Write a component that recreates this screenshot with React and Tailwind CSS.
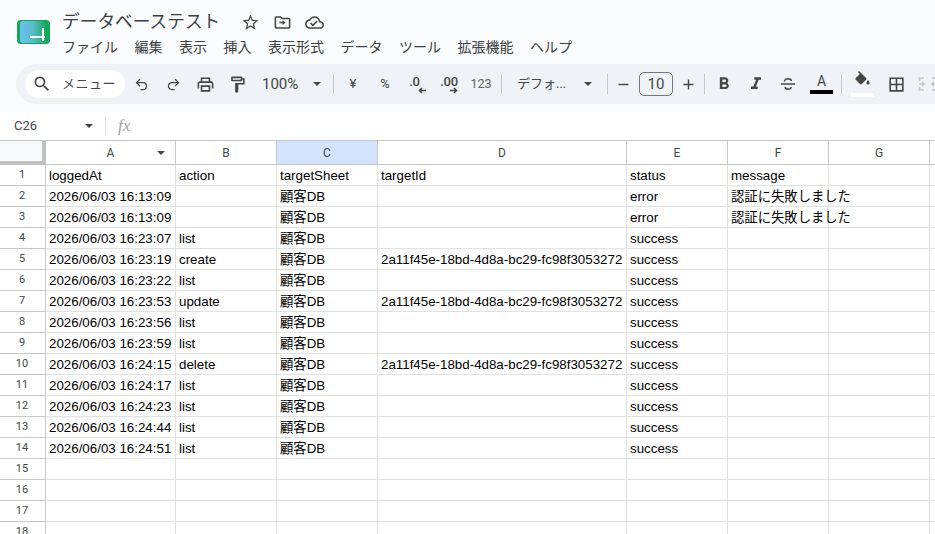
import { Undo2, Redo2 } from "lucide-react";

const menus = ["ファイル", "編集", "表示", "挿入", "表示形式", "データ", "ツール", "拡張機能", "ヘルプ"];
const cols = [
  { name: "A", w: "w-[130px]" },
  { name: "B", w: "w-[101px]" },
  { name: "C", w: "w-[101px]" },
  { name: "D", w: "w-[249px]" },
  { name: "E", w: "w-[101px]" },
  { name: "F", w: "w-[101px]" },
  { name: "G", w: "w-[101px]" },
  { name: "", w: "w-[6px]" },
];
const id = "2a11f45e-18bd-4d8a-bc29-fc98f3053272";
const err = "認証に失敗しました";
const db = "顧客DB";
const rows = [
  ["loggedAt", "action", "targetSheet", "targetId", "status", "message"],
  ["2026/06/03 16:13:09", "", db, "", "error", err],
  ["2026/06/03 16:13:09", "", db, "", "error", err],
  ["2026/06/03 16:23:07", "list", db, "", "success", ""],
  ["2026/06/03 16:23:19", "create", db, id, "success", ""],
  ["2026/06/03 16:23:22", "list", db, "", "success", ""],
  ["2026/06/03 16:23:53", "update", db, id, "success", ""],
  ["2026/06/03 16:23:56", "list", db, "", "success", ""],
  ["2026/06/03 16:23:59", "list", db, "", "success", ""],
  ["2026/06/03 16:24:15", "delete", db, id, "success", ""],
  ["2026/06/03 16:24:17", "list", db, "", "success", ""],
  ["2026/06/03 16:24:23", "list", db, "", "success", ""],
  ["2026/06/03 16:24:44", "list", db, "", "success", ""],
  ["2026/06/03 16:24:51", "list", db, "", "success", ""],
  ["", "", "", "", "", ""],
  ["", "", "", "", "", ""],
  ["", "", "", "", "", ""],
  ["", "", "", "", "", ""],
];

// material style glyphs, 24x24 box
const paths = {
  search: "M15.5 14h-.79l-.28-.27A6.47 6.47 0 0 0 16 9.5 6.5 6.5 0 1 0 9.5 16c1.61 0 3.09-.59 4.23-1.57l.27.28v.79l5 4.99L20.49 19l-4.99-5zm-6 0C7.01 14 5 11.99 5 9.5S7.01 5 9.5 5 14 7.01 14 9.5 11.99 14 9.5 14z",
  star: "M22 9.24l-7.19-.62L12 2 9.19 8.63 2 9.24l5.46 4.73L5.82 21 12 17.27 18.18 21l-1.63-7.03L22 9.24zM12 15.4l-3.76 2.27 1-4.28-3.32-2.88 4.38-.38L12 6.1l1.71 4.04 4.38.38-3.32 2.88 1 4.28L12 15.4z",
  folder: "M20 6h-8l-2-2H4c-1.1 0-1.99.9-1.99 2L2 18c0 1.1.9 2 2 2h16c1.1 0 2-.9 2-2V8c0-1.1-.9-2-2-2zm0 12H4V6h5.17l2 2H20v10zm-8-5H8v-2h4V9l4 3-4 3z",
  cloud: "M19.35 10.04C18.67 6.59 15.64 4 12 4 9.11 4 6.6 5.64 5.35 8.04 2.34 8.36 0 10.91 0 14c0 3.31 2.69 6 6 6h13c2.76 0 5-2.24 5-5 0-2.64-2.05-4.78-4.65-4.96zM19 18H6c-2.21 0-4-1.79-4-4 0-2.05 1.53-3.76 3.56-3.97l1.07-.11.5-.95C8.08 7.14 9.94 6 12 6c2.62 0 4.88 1.86 5.39 4.43l.3 1.5 1.53.11c1.56.1 2.78 1.41 2.78 2.96 0 1.65-1.35 3-3 3zm-9-3.82l-2.09-2.09L6.5 13.5 10 17l6.01-6.01-1.41-1.41z",
  print: "M19 8h-1V3H6v5H5c-1.66 0-3 1.34-3 3v6h4v4h12v-4h4v-6c0-1.66-1.34-3-3-3zM8 5h8v3H8V5zm8 14H8v-4h8v4zm2-2v-4H6v4H4v-6c0-.55.45-1 1-1h14c.55 0 1 .45 1 1v6h-2z",
  paint: "M18 4V3c0-.55-.45-1-1-1H5c-.55 0-1 .45-1 1v4c0 .55.45 1 1 1h12c.55 0 1-.45 1-1V6h1v4H9v11c0 .55.45 1 1 1h2c.55 0 1-.45 1-1v-9h8V4h-3zm-2 2H6V4h10v2z",
  bold: "M15.6 10.79c.97-.67 1.65-1.77 1.65-2.79 0-2.26-1.75-4-4-4H7v14h7.04c2.09 0 3.71-1.7 3.71-3.79 0-1.52-.86-2.82-2.15-3.42zM10 6.5h3c.83 0 1.5.67 1.5 1.5s-.67 1.5-1.5 1.5h-3v-3zm3.5 9H10v-3h3.5c.83 0 1.5.67 1.5 1.5s-.67 1.5-1.5 1.5z",
  italic: "M10 4v3h2.21l-3.42 8H6v3h8v-3h-2.21l3.42-8H18V4z",
  bucket: "M16.56 8.94L7.62 0 6.21 1.41l2.38 2.38-5.15 5.15c-.59.59-.59 1.54 0 2.12l5.5 5.5c.29.29.68.44 1.06.44s.77-.15 1.06-.44l5.5-5.5c.59-.58.59-1.53 0-2.12zM19 11.5s-2 2.17-2 3.5c0 1.1.9 2 2 2s2-.9 2-2c0-1.33-2-3.5-2-3.5z",
  borders: "M3 3v18h18V3H3zm8 16H5v-6h6v6zm0-8H5V5h6v6zm8 8h-6v-6h6v6zm0-8h-6V5h6v6z",
  minus: "M5 11h14v2H5z",
  plus: "M19 13h-6v6h-2v-6H5v-2h6V5h2v6h6v2z",
};

function Glyph({ d, size = 18, className = "" }) {
  return (
    <svg width={size} height={size} viewBox="0 0 24 24" fill="currentColor" className={`shrink-0 ${className}`}>
      <path d={paths[d]} />
    </svg>
  );
}

function Slot({ w = "w-[32px]", className = "", children }) {
  return <div className={`${w} shrink-0 flex items-center justify-center ${className}`}>{children}</div>;
}

function Caret({ className = "" }) {
  return <span className={`shrink-0 w-0 h-0 border-x-[4px] border-x-transparent border-t-[4px] border-t-[#444746] ${className}`} />;
}

function Divider({ className = "" }) {
  return <span className={`w-px h-5 bg-[#c7c7c7] shrink-0 ${className}`} />;
}

function Logo() {
  return (
    <div className="w-[33px] h-[24px] rounded-[4px] bg-[#12a85a] pl-[3px] py-[1px] relative shrink-0">
      <div className="w-[26px] h-[22px] rounded-l-[3px] bg-gradient-to-r from-[#6cc0f4] via-[#58bcc8] to-[#12a85a]" />
      <span className="absolute left-[13px] top-[16px] w-[15px] h-[2px] bg-white" />
      <span className="absolute left-[25px] top-[8px] w-[2px] h-[13px] bg-white" />
    </div>
  );
}

function Strike() {
  return (
    <svg width="16" height="16" viewBox="0 0 16 16" fill="none" stroke="currentColor" strokeWidth="1.5" className="shrink-0">
      <path d="M1 8h14" />
      <path d="M4.5 5.5C4.5 3.6 6 2.8 8 2.8s3.2.8 3.4 2.2" />
      <path d="M5 11c.3 1.5 1.4 2.2 3 2.2s3-.8 3.2-2.2" />
    </svg>
  );
}

function MergeCells() {
  return (
    <svg width="20" height="16" viewBox="0 0 20 16" fill="none" stroke="currentColor" strokeWidth="1.6" className="shrink-0">
      <path d="M6 2H1.5v3M1.5 11v3H6" />
      <path d="M1 8h5M4 6l2 2-2 2" />
      <path d="M14 2h4.500v3M18.500 11v3H14" />
      <path d="M19 8h-5M16 6l-2 2 2 2" />
    </svg>
  );
}

function Decimal({ label, left }) {
  return (
    <div className={`relative w-[32px] h-[24px] pt-[2px] shrink-0 flex justify-center ${left ? "pr-[5px]" : ""}`}>
      <span className="text-[13px] leading-[16px] font-medium tracking-[-0.3px] text-[#444746]">{label}</span>
      <svg width="8" height="7" viewBox="0 0 8 7" fill="none" stroke="currentColor" strokeWidth="1.6" className="absolute top-[15px] left-[17px]">
        {left ? <path d="M8 3.500H1.500M4 1L1.500 3.500 4 6" /> : <path d="M0 3.500h6.500M4 1l2.500 2.500L4 6" />}
      </svg>
    </div>
  );
}

export default function App() {
  return (
    <div className="w-[935px] h-[534px] overflow-hidden bg-white font-['Roboto','Noto_Sans_CJK_JP',sans-serif] text-[#202124]">
      <div className="h-[112px] bg-[#f9fbfd] flex flex-col">
        <div className="h-[64px] flex shrink-0">
          <div className="w-[62px] pl-[17px] pt-[20px] shrink-0">
            <Logo />
          </div>
          <div className="flex flex-col">
            <div className="flex items-center h-[22px] mt-[11px]">
              <span className="text-[17.700px] leading-[22px] text-[#3c4043] w-[179px] whitespace-nowrap">データベーステスト</span>
              <div className="flex items-center gap-[13px] text-[#444746]">
                <Glyph d="star" size={19} />
                <Glyph d="folder" size={19} />
                <Glyph d="cloud" size={19} />
              </div>
            </div>
            <div className="flex gap-[16.500px] mt-[4px] text-[14px] leading-[20px] text-[#3c4043] whitespace-nowrap">
              {menus.map((m) => (
                <span key={m}>{m}</span>
              ))}
            </div>
          </div>
        </div>
        <div className="ml-[16px] w-[940px] h-[40px] rounded-l-[20px] bg-[#eff2f6] flex items-center pl-[9px] text-[#444746] shrink-0">
          <div className="w-[100px] h-[28px] rounded-full bg-white flex items-center pl-[7px] gap-[10px] shrink-0">
            <Glyph d="search" size={20} />
            <span className="text-[13px] whitespace-nowrap tracking-[0.5px]">メニュー</span>
          </div>
          <Slot><Undo2 size={15} strokeWidth={2} /></Slot>
          <Slot><Redo2 size={15} strokeWidth={2} /></Slot>
          <Slot><Glyph d="print" size={19} /></Slot>
          <Slot><Glyph d="paint" size={19} /></Slot>
          <span className="text-[15px] ml-[9px] w-[37px]">100%</span>
          <Caret className="ml-[14px]" />
          <Divider className="ml-[12px]" />
          <Slot className="ml-[3px] text-[13px]">¥</Slot>
          <Slot className="text-[13px]">%</Slot>
          <Decimal label=".0" left />
          <Decimal label=".00" />
          <Slot className="text-[12.500px] text-[#5f6368]">123</Slot>
          <Divider className="ml-[4px]" />
          <span className="text-[13px] ml-[15px] w-[52px] whitespace-nowrap">デフォ...</span>
          <Caret className="ml-[15px]" />
          <Divider className="ml-[15px]" />
          <Slot w="w-[31px]"><Glyph d="minus" size={17} /></Slot>
          <div className="w-[34px] h-[24px] rounded-[5px] border border-[#747775] flex items-center justify-center text-[15px] shrink-0">10</div>
          <Slot w="w-[30px]"><Glyph d="plus" size={17} /></Slot>
          <Divider className="ml-[1px]" />
          <Slot className="ml-[3px]"><Glyph d="bold" size={20} /></Slot>
          <Slot><Glyph d="italic" size={20} /></Slot>
          <Slot><Strike /></Slot>
          <div className="ml-[6px] w-[23px] h-[22px] flex flex-col items-center shrink-0">
            <span className="text-[14px] leading-[17px]">A</span>
            <span className="w-[23px] h-[4px] bg-black" />
          </div>
          <Divider className="ml-[8px]" />
          <div className="ml-[9px] w-[23px] h-[26px] flex flex-col items-center shrink-0">
            <Glyph d="bucket" size={19} />
            <span className="w-[23px] h-[4px] bg-white mt-[3px]" />
          </div>
          <Slot className="ml-[6px]"><Glyph d="borders" size={19} /></Slot>
          <Slot className="text-[#c4c7c5]"><MergeCells /></Slot>
        </div>
      </div>

      <div className="h-[29px] flex items-center text-[13px] text-[#444746] border-b border-[#c7c7c7]">
        <span className="ml-[14px] w-[71px]">C26</span>
        <Caret />
        <Divider className="ml-[12px] h-[17px] bg-[#e1e3e1]" />
        <span className="ml-[12px] font-['Liberation_Serif',serif] italic text-[17px] text-[#a0a3a6]">fx</span>
      </div>

      <div className="flex h-[24px] text-[12px] text-[#444746]">
        <div className="w-[46px] border-r-[4px] border-b-[4px] border-[#c0c0c0] bg-[#f8f9fa] shrink-0" />
        {cols.map((c, i) => (
          <div
            key={c.name || i}
            className={`${c.w} shrink-0 border-r border-b border-[#c7c7c7] flex items-center justify-center relative ${c.name === "C" ? "bg-[#d3e3fd]" : "bg-white"}`}
          >
            {c.name}
            {c.name === "A" && <Caret className="absolute right-[10px] top-[10px]" />}
          </div>
        ))}
      </div>

      {rows.map((r, i) => (
        <div key={i} className="flex h-[21px] text-[13.330px] text-black">
          <div className="w-[46px] shrink-0 border-r border-b border-[#c7c7c7] flex items-center justify-center pr-[1px] text-[11px] text-[#444746]">
            {i + 1}
          </div>
          {cols.map((c, j) => (
            <div key={j} className={`${c.w} shrink-0 border-r border-b border-[#e1e1e1] flex items-center pl-[3px] pt-[1px] whitespace-nowrap`}>
              <span className="font-['Liberation_Sans','Noto_Sans_CJK_JP',sans-serif]">{r[j]}</span>
            </div>
          ))}
        </div>
      ))}
    </div>
  );
}
